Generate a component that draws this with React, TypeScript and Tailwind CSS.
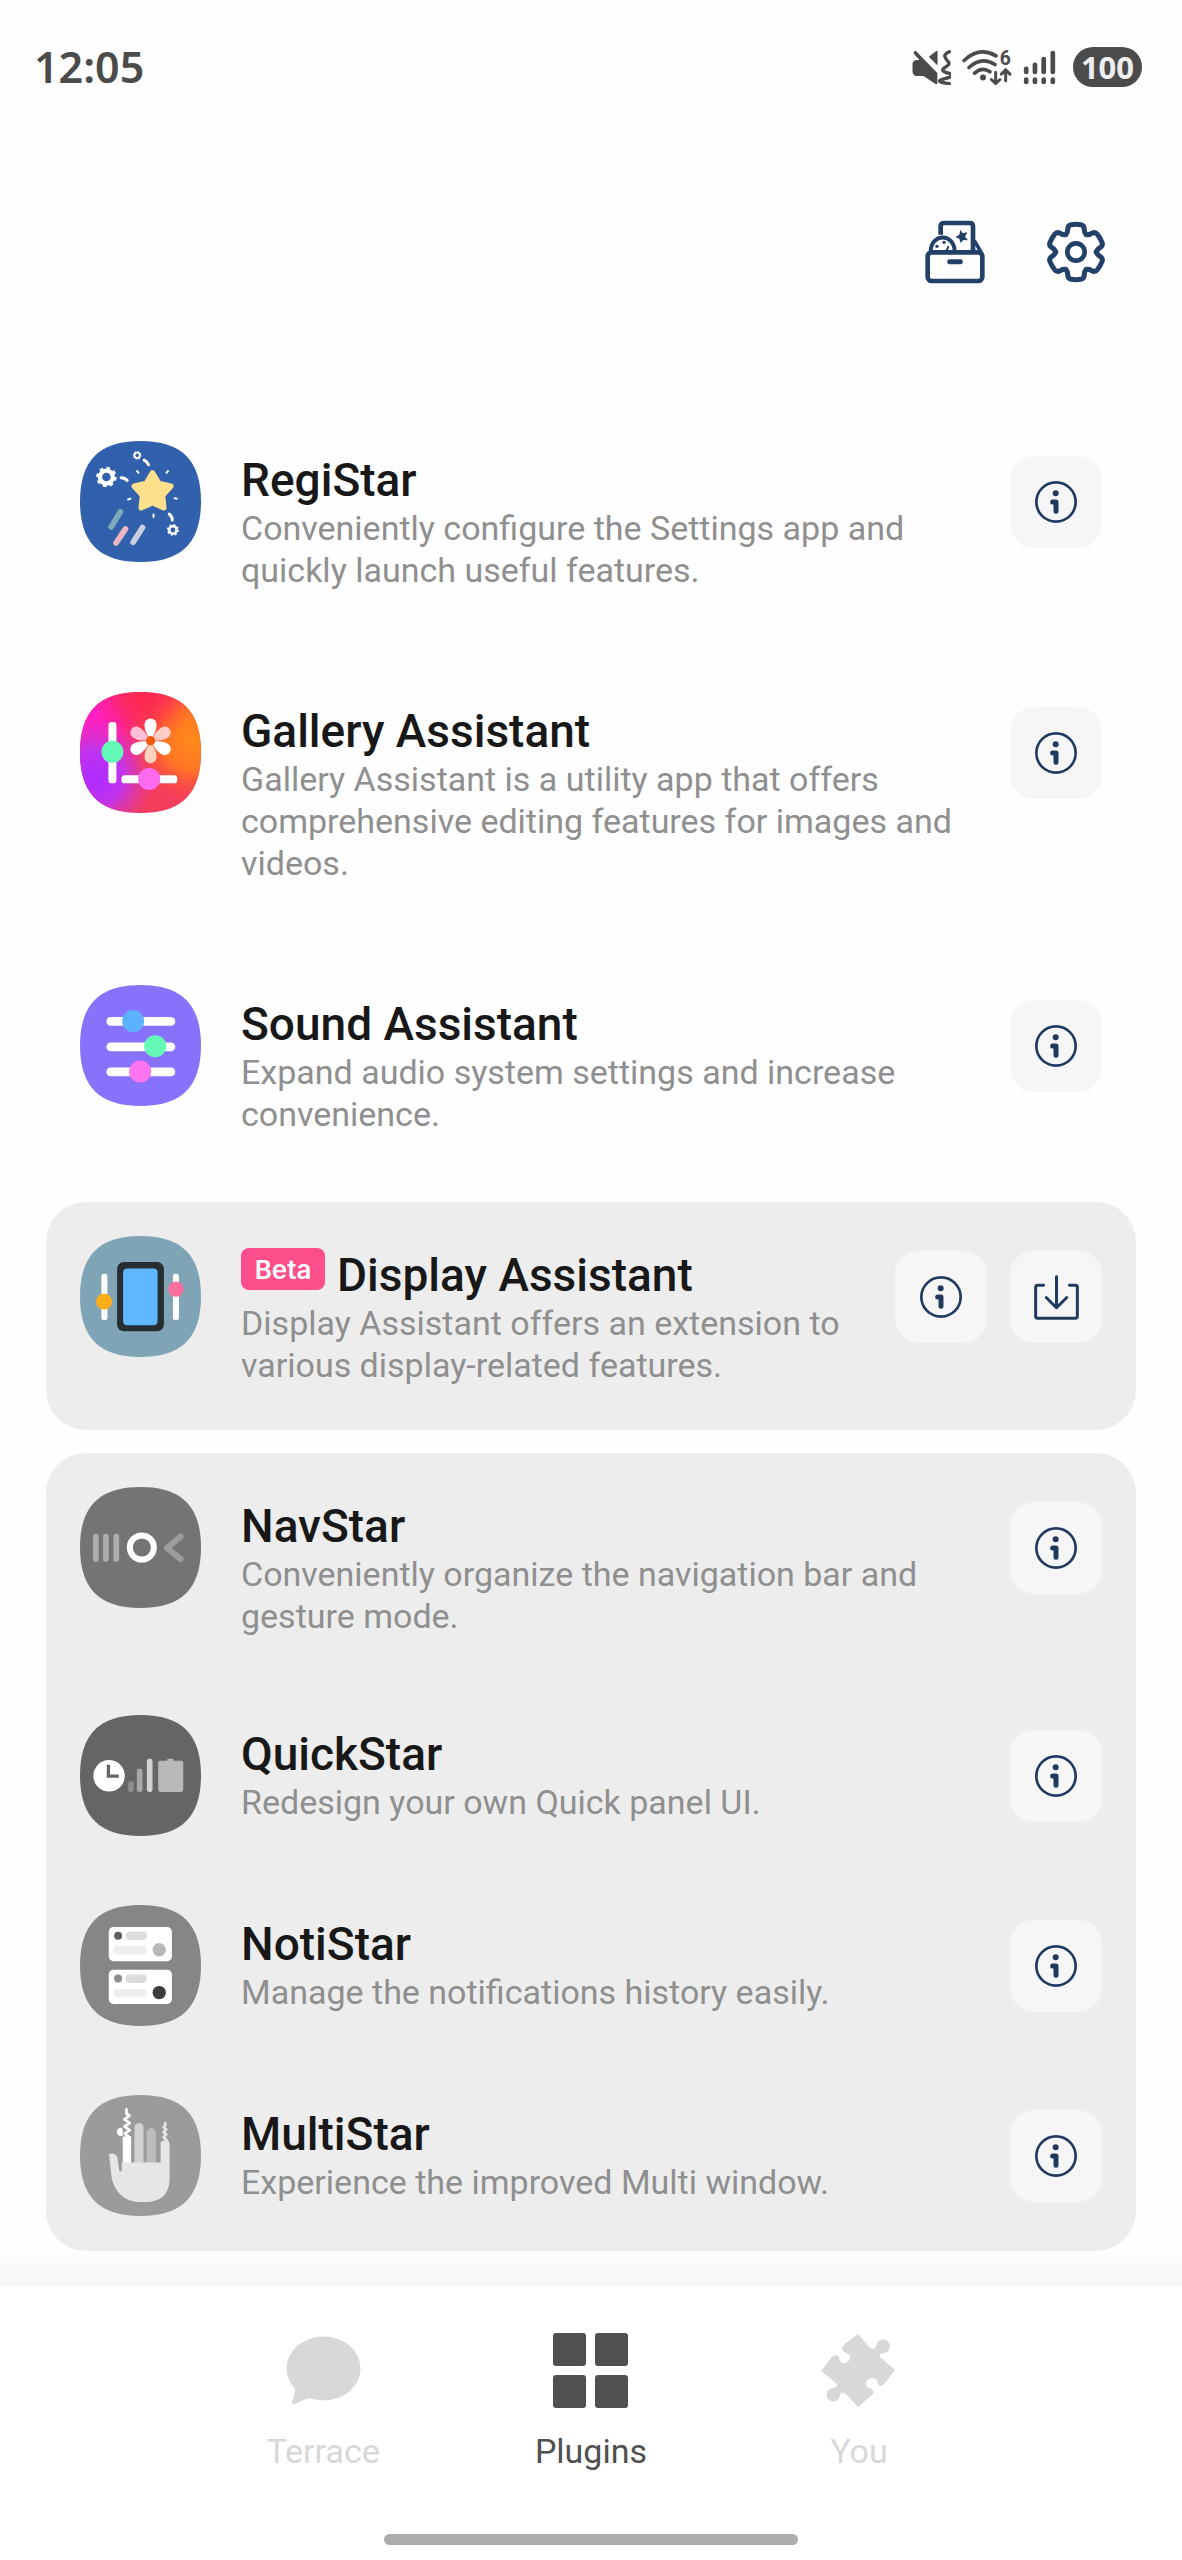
import type { ReactNode } from "react";

interface Plugin {
  name: string;
  description: string;
  icon: ReactNode;
  beta?: boolean;
  downloadable?: boolean;
}

const SQUIRCLE =
  "M0 181C0 58 58 0 181 0S362 58 362 181 304 362 181 362 0 304 0 181Z";

function AppIcon({ color, children }: { color: string; children: ReactNode }) {
  return (
    <svg viewBox="0 0 362 362" className="size-[121px] shrink-0" aria-hidden="true">
      <path d={SQUIRCLE} fill={color} />
      {children}
    </svg>
  );
}

function Cog({ x, y, r }: { x: number; y: number; r: number }) {
  return (
    <g stroke="#fff" fill="none">
      <circle cx={x} cy={y} r={r * 0.62} strokeWidth={r * 0.42} />
      <circle
        cx={x}
        cy={y}
        r={r * 0.87}
        strokeWidth={r * 0.24}
        pathLength={16}
        strokeDasharray="1 1"
      />
    </g>
  );
}

function RegiStarIcon() {
  return (
    <AppIcon color="#3161ac">
      <Cog x={79} y={108} r={31} />
      <Cog x={171} y={43} r={13} />
      <Cog x={278} y={266} r={18} />
      <path
        d="M217 95L236 127 272 135 247 163 251 200 217 185 183 200 187 163 162 135 198 127Z"
        fill="#fde08c"
        stroke="#fde08c"
        strokeWidth="16"
        strokeLinejoin="round"
      />
      <g fill="none" stroke="#fff" strokeLinecap="round">
        <path
          d="M123 110Q136 111 141 118M192 57Q202 62 205 71M267 219Q276 227 276 236"
          strokeWidth="9"
        />
        <path
          d="M171 90L175 95M263 90L259 95M144 175L151 173M283 171L289 173M220 220V227"
          strokeWidth="6"
        />
      </g>
      <g fill="none" strokeWidth="17" strokeLinecap="round">
        <path d="M121 212L93 257" stroke="#7cabba" />
        <path d="M136 263L108 305" stroke="#eeb5c0" />
        <path d="M187 259L159 303" stroke="#c9cfdd" />
      </g>
    </AppIcon>
  );
}

const PETALS = [
  { angle: 0, fill: "#fff" },
  { angle: 60, fill: "#ffccc8" },
  { angle: 120, fill: "#fff" },
  { angle: 180, fill: "#ffd3bd" },
  { angle: 240, fill: "#fff" },
  { angle: 300, fill: "#ffbfd6" },
];

function GalleryIcon() {
  return (
    <AppIcon color="#f43c5c">
      <defs>
        <radialGradient id="ga-purple" gradientUnits="userSpaceOnUse" cx="45" cy="255" r="180">
          <stop offset="0" stopColor="#ae2bff" />
          <stop offset="0.45" stopColor="#c032ef" />
          <stop offset="1" stopColor="#d83ac0" stopOpacity="0" />
        </radialGradient>
        <radialGradient id="ga-magenta" gradientUnits="userSpaceOnUse" cx="20" cy="90" r="190">
          <stop offset="0" stopColor="#ff1fc8" />
          <stop offset="0.5" stopColor="#ff1fb4" />
          <stop offset="1" stopColor="#ff2080" stopOpacity="0" />
        </radialGradient>
        <radialGradient id="ga-orange" gradientUnits="userSpaceOnUse" cx="340" cy="140" r="190">
          <stop offset="0" stopColor="#ff8a1a" />
          <stop offset="0.5" stopColor="#ff7425" />
          <stop offset="1" stopColor="#ff4a3c" stopOpacity="0" />
        </radialGradient>
        <radialGradient id="ga-red" gradientUnits="userSpaceOnUse" cx="190" cy="10" r="150">
          <stop offset="0" stopColor="#ff2650" />
          <stop offset="1" stopColor="#ff2850" stopOpacity="0" />
        </radialGradient>
      </defs>
      <path d={SQUIRCLE} fill="url(#ga-magenta)" />
      <path d={SQUIRCLE} fill="url(#ga-purple)" />
      <path d={SQUIRCLE} fill="url(#ga-orange)" />
      <path d={SQUIRCLE} fill="url(#ga-red)" />
      <g fill="#fff">
        <rect x="85" y="90" width="24" height="183" rx="10" />
        <rect x="124" y="249" width="167" height="24" rx="10" />
      </g>
      <circle cx="97" cy="179" r="33" fill="#65f9b8" />
      <circle cx="207" cy="260" r="33" fill="#ff6bf0" />
      {PETALS.map((petal) => (
        <path
          key={petal.angle}
          d="M211 142C196 122 193 109 193 97A18 18 0 0 1 229 97C229 109 226 122 211 142Z"
          fill={petal.fill}
          transform={`rotate(${petal.angle} 211 146)`}
        />
      ))}
      <circle cx="211" cy="146" r="14" fill="#f0590f" />
    </AppIcon>
  );
}

function SoundIcon() {
  return (
    <AppIcon color="#8871fb">
      <g fill="#fff">
        <rect x="79" y="96" width="206" height="26" rx="13" />
        <rect x="79" y="172" width="206" height="26" rx="13" />
        <rect x="79" y="247" width="206" height="26" rx="13" />
      </g>
      <circle cx="159" cy="108" r="33" fill="#5cb2ff" />
      <circle cx="225" cy="183" r="33" fill="#65f9b8" />
      <circle cx="180" cy="259" r="33" fill="#ff74f0" />
    </AppIcon>
  );
}

function DisplayIcon() {
  return (
    <AppIcon color="#7fa4b5">
      <g fill="#fff">
        <rect x="64" y="113" width="18" height="139" rx="8" />
        <rect x="278" y="113" width="18" height="139" rx="8" />
      </g>
      <circle cx="72" cy="196" r="24" fill="#fbae17" />
      <circle cx="287" cy="159" r="23" fill="#ff6f9c" />
      <rect x="111" y="78" width="140" height="207" rx="20" fill="#272e33" />
      <rect x="129" y="97" width="103" height="170" rx="12" fill="#5fb7ff" />
    </AppIcon>
  );
}

function NavIcon() {
  return (
    <AppIcon color="#747474">
      <g fill="#adadad">
        <rect x="39" y="140" width="17" height="84" rx="7" />
        <rect x="69" y="140" width="17" height="84" rx="7" />
        <rect x="100" y="140" width="17" height="84" rx="7" />
      </g>
      <circle cx="185" cy="181" r="36" fill="none" stroke="#fff" strokeWidth="18" />
      <path
        d="M301 148L260 182L301 215"
        fill="none"
        stroke="#9c9c9c"
        strokeWidth="18"
        strokeLinecap="round"
        strokeLinejoin="round"
      />
    </AppIcon>
  );
}

function QuickIcon() {
  return (
    <AppIcon color="#656565">
      <circle cx="87" cy="182" r="47" fill="#fff" />
      <path d="M85 149V183H116" fill="none" stroke="#656565" strokeWidth="10" />
      <rect x="144" y="198" width="17" height="32" rx="6" fill="#8e8e8e" />
      <rect x="170" y="161" width="17" height="69" rx="6" fill="#a8a8a8" />
      <rect x="200" y="131" width="17" height="99" rx="6" fill="#d2d2d2" />
      <rect x="261" y="131" width="19" height="12" rx="3" fill="#b8b8b8" />
      <rect x="234" y="137" width="75" height="93" rx="6" fill="#b8b8b8" />
    </AppIcon>
  );
}

function NotiIcon() {
  return (
    <AppIcon color="#868686">
      <rect x="86" y="66" width="189" height="102" rx="14" fill="#fff" />
      <circle cx="114" cy="92" r="12" fill="#5f5f5f" />
      <rect x="136" y="80" width="64" height="25" rx="12" fill="#dcdcdc" />
      <rect x="100" y="123" width="100" height="25" rx="12" fill="#eee" />
      <circle cx="237" cy="134" r="20" fill="#b8b8b8" />
      <rect x="86" y="194" width="189" height="102" rx="14" fill="#fff" />
      <circle cx="114" cy="220" r="12" fill="#8c8c8c" />
      <rect x="136" y="208" width="64" height="25" rx="12" fill="#dcdcdc" />
      <rect x="100" y="251" width="100" height="25" rx="12" fill="#eee" />
      <circle cx="237" cy="262" r="20" fill="#3c3c3c" />
    </AppIcon>
  );
}

function MultiIcon() {
  return (
    <AppIcon color="#9b9b9b">
      <path d="M163 206V97A13 13 0 0 1 190 97V206Z" fill="#d2d2d2" />
      <path d="M199 206V113A14 14 0 0 1 227 113V206Z" fill="#bcbcbc" />
      <rect x="128" y="124" width="25" height="82" fill="#fff" />
      <path
        d="M87 177Q102 171 111 184L118 228H125V202H241V142Q247 136 250 136H264L268 146V256Q264 314 208 320H170Q112 314 95 250Z"
        fill="#e6e6e6"
      />
      <path d="M125 98H118A14 14 0 0 0 118 123H128V106Z" fill="#fff" />
      <g fill="none" strokeLinejoin="round" strokeLinecap="round">
        <path
          d="M139 43V56L148 62 133 73 149 84 133 94 149 106 134 115 145 124"
          stroke="#fff"
          strokeWidth="8"
        />
        <path
          d="M255 84V91L250 97 258 103 250 111 258 118 250 126 258 134V138"
          stroke="#e6e6e6"
          strokeWidth="8"
        />
      </g>
    </AppIcon>
  );
}

function InfoIcon() {
  return (
    <svg viewBox="0 0 126 126" className="size-[42px]" fill="none" stroke="#203a5f" aria-hidden="true">
      <circle cx="63" cy="63" r="59" strokeWidth="8" />
      <circle cx="62" cy="37" r="9" fill="#203a5f" stroke="none" />
      <path d="M53 63H63V91" strokeWidth="15" strokeLinecap="round" strokeLinejoin="round" />
    </svg>
  );
}

function DownloadIcon() {
  return (
    <svg
      viewBox="0 0 136 136"
      className="size-[45px]"
      fill="none"
      stroke="#203a5f"
      strokeWidth="9"
      strokeLinecap="round"
      strokeLinejoin="round"
      aria-hidden="true"
    >
      <path d="M29 31H11Q5 31 5 37V125Q5 131 11 131H125Q131 131 131 125V37Q131 31 125 31H107" />
      <path d="M68 5V99M37 68L68 99L99 68" />
    </svg>
  );
}

function BoxIcon() {
  return (
    <svg
      viewBox="-7 -2 192 192"
      className="size-16"
      fill="none"
      stroke="#234069"
      strokeWidth="14"
      strokeLinejoin="round"
      aria-hidden="true"
    >
      <path d="M46 42V17Q46 7 56 7H134Q143 7 143 17V95" />
      <path d="M16 94C16 36 88 36 88 94" strokeWidth="12" />
      <path d="M147 60L168 96" strokeWidth="11" />
      <rect x="7" y="95" width="164" height="86" rx="12" />
      <g fill="#234069" stroke="none">
        <circle cx="35" cy="77" r="5" />
        <circle cx="56" cy="65" r="5" />
        <rect x="66" y="116" width="46" height="15" rx="6" />
        <path d="M105 27L112 38 126 35 119 48 128 59 114 58 106 67 102 54 90 50 102 42Z" />
      </g>
      <path d="M69 76Q68 84 63 89" strokeWidth="6" />
    </svg>
  );
}

const TOOTH =
  "M-30 -53Q-25 -59 -25 -66L-24 -74Q-22 -81 -14 -82Q0 -84 14 -82Q22 -81 24 -74L25 -66Q25 -59 30 -53";

function GearIcon() {
  return (
    <svg
      viewBox="-96 -96 192 192"
      className="size-16"
      fill="none"
      stroke="#234069"
      strokeWidth="15"
      strokeLinecap="round"
      aria-hidden="true"
    >
      {[0, 60, 120, 180, 240, 300].map((angle) => (
        <path key={angle} d={TOOTH} transform={`rotate(${angle})`} />
      ))}
      <circle r="26" strokeWidth="14" />
    </svg>
  );
}

function StatusBar() {
  return (
    <div className="flex items-center justify-between pt-[47px] pr-10 pl-[34px] text-[#4b4b4b]">
      <span className="font-['Noto_Sans','Open_Sans',sans-serif] text-[43px] leading-10 font-semibold">
        12:05
      </span>
      <div className="flex items-center gap-[11px]">
        <svg viewBox="0 0 116 104" className="h-[35px] w-[39px]" aria-hidden="true">
          <path
            d="M10 6L72 70V98L36 74H12Q5 72 5 62V42Q5 34 14 33H30L8 9Z"
            fill="currentColor"
            stroke="currentColor"
            strokeWidth="7"
            strokeLinejoin="round"
          />
          <path d="M50 20L72 3Q76 1 76 5V46Z" fill="currentColor" />
          <path
            d="M111 5Q95 12 98 20T108 35 98 52 108 69 98 85 111 100"
            fill="none"
            stroke="currentColor"
            strokeWidth="10"
            strokeLinecap="round"
          />
        </svg>
        <svg
          viewBox="0 0 150 104"
          className="h-[35px] w-[50px] overflow-visible"
          fill="none"
          stroke="currentColor"
          strokeWidth="11"
          strokeLinecap="round"
          aria-hidden="true"
        >
          <path d="M6 31Q52 -12 102 17M21 52Q58 18 99 43M38 69Q60 49 84 65" />
          <circle cx="63" cy="82" r="9" fill="currentColor" stroke="none" />
          <path d="M101 66V99M88 88L101 100L114 88M131 92V60M118 72L131 59L144 72" strokeWidth="9" />
          <text
            x="113"
            y="43"
            fontSize="58"
            fontWeight="700"
            fill="currentColor"
            stroke="none"
            fontFamily="Roboto, sans-serif"
          >
            6
          </text>
        </svg>
        <svg
          viewBox="0 0 97 104"
          className="h-[35px] w-[33px]"
          stroke="currentColor"
          strokeWidth="14"
          strokeLinecap="round"
          aria-hidden="true"
        >
          <path d="M9 56V65M35 44V65M61 27V65M88 9V65M9 88V95M35 88V95M61 88V95M88 88V95" />
        </svg>
        <span className="ml-1.5 flex h-10 w-[69px] items-center justify-center rounded-full bg-[#4b4b4b] font-['Noto_Sans','Open_Sans',sans-serif] text-[31px] leading-10 font-bold text-[#eee]">
          100
        </span>
      </div>
    </div>
  );
}

const actionClass =
  "flex size-[92px] items-center justify-center rounded-3xl bg-[#f6f6f7]";

function PluginRow({ plugin }: { plugin: Plugin }) {
  return (
    <li className="flex items-start px-[34px] pt-[34px] pb-[35px]">
      {plugin.icon}
      <div className="min-w-0 flex-1 px-10 pt-3 pb-[9px]">
        <div className="flex items-start gap-3">
          {plugin.beta && (
            <span className="flex h-[42px] w-[84px] items-center justify-center rounded-lg bg-[#fc4e8b] font-['Inter',sans-serif] text-[26px] font-semibold text-white">
              Beta
            </span>
          )}
          <h2 className="text-[46px] leading-[54px] font-medium text-[#181818]">{plugin.name}</h2>
        </div>
        <p className="text-[34px] leading-[42px] text-[#8f8f8f]">{plugin.description}</p>
      </div>
      <div className="flex gap-[23px] pt-[15px]">
        <button type="button" className={actionClass} aria-label={`About ${plugin.name}`}>
          <InfoIcon />
        </button>
        {plugin.downloadable && (
          <button type="button" className={actionClass} aria-label={`Install ${plugin.name}`}>
            <DownloadIcon />
          </button>
        )}
      </div>
    </li>
  );
}

const installed: Plugin[] = [
  {
    name: "RegiStar",
    description: "Conveniently configure the Settings app and quickly launch useful features.",
    icon: <RegiStarIcon />,
  },
  {
    name: "Gallery Assistant",
    description:
      "Gallery Assistant is a utility app that offers comprehensive editing features for images and videos.",
    icon: <GalleryIcon />,
  },
  {
    name: "Sound Assistant",
    description: "Expand audio system settings and increase convenience.",
    icon: <SoundIcon />,
  },
];

const available: Plugin[] = [
  {
    name: "Display Assistant",
    description: "Display Assistant offers an extension to various display-related features.",
    icon: <DisplayIcon />,
    beta: true,
    downloadable: true,
  },
];

const unsupported: Plugin[] = [
  {
    name: "NavStar",
    description: "Conveniently organize the navigation bar and gesture mode.",
    icon: <NavIcon />,
  },
  {
    name: "QuickStar",
    description: "Redesign your own Quick panel UI.",
    icon: <QuickIcon />,
  },
  {
    name: "NotiStar",
    description: "Manage the notifications history easily.",
    icon: <NotiIcon />,
  },
  {
    name: "MultiStar",
    description: "Experience the improved Multi window.",
    icon: <MultiIcon />,
  },
];

function BottomNav() {
  return (
    <nav className="bg-white pt-[47px] pb-[15px]">
      <div className="mx-auto grid w-[68%] grid-cols-3 text-[34px] leading-[42px] text-[#d8d8d8]">
        <a href="#terrace" className="flex flex-col items-center gap-[22px]">
          <svg viewBox="0 0 75 75" className="size-[75px]" fill="currentColor" aria-hidden="true">
            <ellipse cx="37.5" cy="35.5" rx="37" ry="32" />
            <path d="M8 50Q10 54 9 58L6 70Q6 73 9 71L20 66Q24 65 28 66Z" />
          </svg>
          Terrace
        </a>
        <a
          href="#plugins"
          aria-current="page"
          className="flex flex-col items-center gap-[22px] text-[#505050]"
        >
          <svg viewBox="0 0 75 75" className="size-[75px]" fill="currentColor" aria-hidden="true">
            <rect width="33" height="33" rx="3" />
            <rect x="42" width="33" height="33" rx="3" />
            <rect y="42" width="33" height="33" rx="3" />
            <rect x="42" y="42" width="33" height="33" rx="3" />
          </svg>
          Plugins
        </a>
        <a href="#you" className="flex flex-col items-center gap-[22px]">
          <svg viewBox="0 0 75 75" className="size-[75px]" fill="currentColor" aria-hidden="true">
            <path d="M37 1L49 15Q54 18 55.500 12A6.800 6.800 0 1 1 63 20Q56 22 60 25L74 37 63 51Q60 55 57 51 57 45 51 45A6 6 0 0 0 45 52Q47 55 51 56 54 59 51 62L37 74 26 62Q20 57 19 62A6.800 6.800 0 1 1 12 55Q19 54 14 49L0 38 11 24Q15 20 18 24 18 30 24 30A6 6 0 0 0 29 23Q27 20 23 19 19 15 24 11Z" />
          </svg>
          You
        </a>
      </div>
      <div className="mx-auto mt-[62px] h-[11px] w-[35%] rounded-full bg-[#adadad]" />
    </nav>
  );
}

export default function App() {
  return (
    <div className="flex min-h-screen flex-col bg-[#fefefe] font-['Roboto',sans-serif]">
      <StatusBar />
      <header className="flex justify-end gap-[57px] pt-[133px] pr-[74px]">
        <button type="button" aria-label="Collections">
          <BoxIcon />
        </button>
        <button type="button" aria-label="Settings">
          <GearIcon />
        </button>
      </header>
      <main className="flex flex-1 flex-col gap-[23px] px-[46px] pt-[123px]">
        <ul className="flex flex-col gap-[23px]">
          {installed.map((plugin) => (
            <PluginRow key={plugin.name} plugin={plugin} />
          ))}
        </ul>
        <ul className="rounded-[40px] bg-[#ededed]">
          {available.map((plugin) => (
            <PluginRow key={plugin.name} plugin={plugin} />
          ))}
        </ul>
        <ul className="rounded-[40px] bg-[#ededed]">
          {unsupported.map((plugin) => (
            <PluginRow key={plugin.name} plugin={plugin} />
          ))}
        </ul>
      </main>
      <div className="h-[35px] bg-gradient-to-b from-[#fefefe] to-[#f6f6f6]" />
      <BottomNav />
    </div>
  );
}
